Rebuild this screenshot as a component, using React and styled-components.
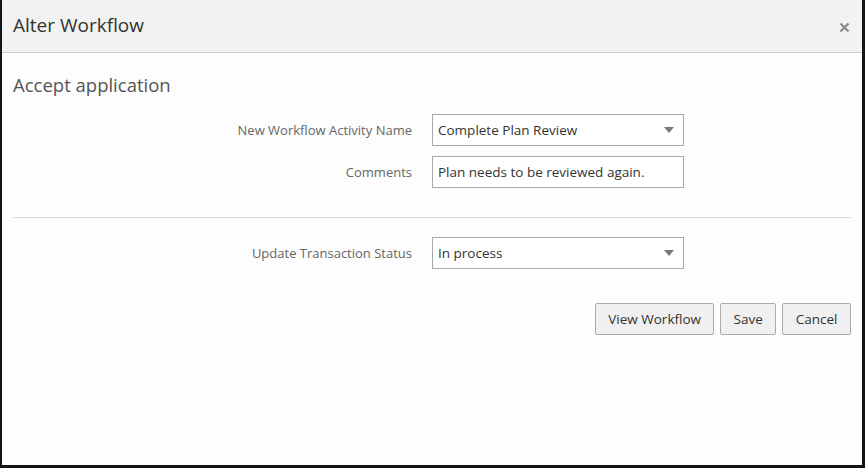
import React from 'react';
import styled, { createGlobalStyle } from 'styled-components';

const GlobalStyle = createGlobalStyle`
  html, body {
    margin: 0;
    padding: 0;
    background: #ffffff;
  }
  body {
    font-family: "Open Sans", "Noto Sans", sans-serif;
  }
`;

const Dialog = styled.div`
  box-sizing: border-box;
  width: 865px;
  height: 468px;
  background: #fdfdfd;
  border-left: 2px solid #151515;
  border-right: 3px solid #151515;
  border-bottom: 3px solid #151515;
  display: flex;
  flex-direction: column;
`;

const Header = styled.div`
  box-sizing: border-box;
  height: 53px;
  background: #f2f2f2;
  border-bottom: 1px solid #cccccc;
  display: flex;
  align-items: center;
  justify-content: space-between;
  padding: 0 10px 0 11px;
`;

const Title = styled.h1`
  margin: 0;
  font-size: 19px;
  font-weight: 400;
  color: #333333;
  padding-bottom: 2px;
`;

const CloseButton = styled.button`
  border: none;
  background: transparent;
  padding: 0;
  width: 16px;
  height: 16px;
  display: flex;
  align-items: center;
  justify-content: center;
  cursor: pointer;
  margin-top: 3px;
`;

const Body = styled.div`
  padding: 19px 11px 0 11px;
  display: flex;
  flex-direction: column;
`;

const Subtitle = styled.h2`
  margin: 0 0 16px 0;
  font-size: 18.5px;
  font-weight: 400;
  color: #555555;
  line-height: 26px;
`;

const Form = styled.div`
  display: flex;
  flex-direction: column;
  gap: 10px;
`;

const Row = styled.div`
  display: grid;
  grid-template-columns: 399px 252px;
  column-gap: 20px;
  align-items: center;
`;

const Label = styled.label`
  text-align: right;
  font-size: 13px;
  color: #666666;
`;

const Field = styled.div`
  box-sizing: border-box;
  position: relative;
  height: 32px;
  border: 1px solid #a9a9a9;
  background: #ffffff;
  display: flex;
  align-items: center;
  padding: 0 5px;
  font-size: 13.5px;
  color: #333333;
`;

const Caret = styled.span`
  position: absolute;
  right: 9px;
  top: 12px;
  width: 0;
  height: 0;
  border-left: 5px solid transparent;
  border-right: 5px solid transparent;
  border-top: 6px solid #7a7a7a;
`;

const Divider = styled.hr`
  margin: 29px 0 19px 0;
  border: none;
  border-top: 1px solid #d4dcdf;
`;

const Actions = styled.div`
  display: flex;
  justify-content: flex-end;
  gap: 6px;
  margin-top: 34px;
`;

const Button = styled.button`
  box-sizing: border-box;
  height: 32px;
  padding: 0 ${p => p.$pad}px;
  border: 1px solid #ababab;
  border-radius: 2px;
  background: #f0f0f0;
  font-family: "Open Sans", "Noto Sans", sans-serif;
  font-size: 13.5px;
  color: #333333;
  cursor: pointer;
`;

const Select = ({ value }) => (
  <Field>
    {value}
    <Caret />
  </Field>
);

const App = () => (
  <>
    <GlobalStyle />
    <Dialog>
      <Header>
        <Title>Alter Workflow</Title>
        <CloseButton aria-label="Close">
          <svg width="11" height="11" viewBox="0 0 11 11">
            <path d="M1.5 1.5 L9.5 9.5 M9.5 1.5 L1.5 9.5" stroke="#8a8a8a" strokeWidth="2.2" />
          </svg>
        </CloseButton>
      </Header>
      <Body>
        <Subtitle>Accept application</Subtitle>
        <Form>
          <Row>
            <Label>New Workflow Activity Name</Label>
            <Select value="Complete Plan Review" />
          </Row>
          <Row>
            <Label>Comments</Label>
            <Field>Plan needs to be reviewed again.</Field>
          </Row>
        </Form>
        <Divider />
        <Form>
          <Row>
            <Label>Update Transaction Status</Label>
            <Select value="In process" />
          </Row>
        </Form>
        <Actions>
          <Button $pad={12}>View Workflow</Button>
          <Button $pad={12.5}>Save</Button>
          <Button $pad={12.5}>Cancel</Button>
        </Actions>
      </Body>
    </Dialog>
  </>
);

export default App;
